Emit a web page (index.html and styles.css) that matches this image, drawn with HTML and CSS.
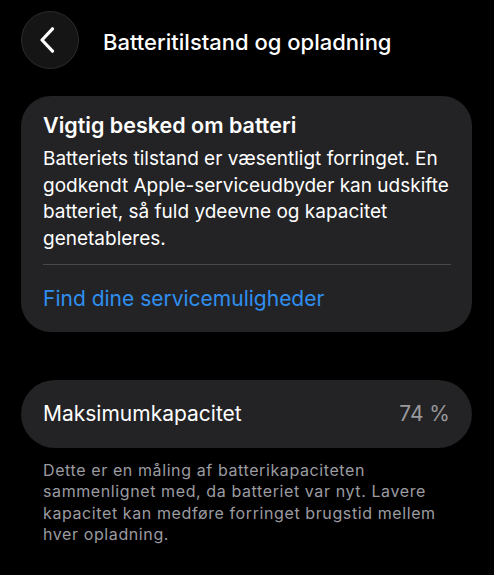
FILE: index.html
```html
<!DOCTYPE html>
<html lang="da">

<head>
    <meta charset="UTF-8">
    <meta name="viewport" content="width=device-width, initial-scale=1.0">
    <title>Batteritilstand og opladning</title>
    <link rel="stylesheet" href="styles.css">
</head>

<body>
    <div class="header">
        <div class="back">
            <svg width="18" height="26" viewBox="0 0 18 26">
                <path d="M13.5 1.8 L3 13 L13.5 24.2" fill="none" stroke="#fff" stroke-width="3.2" stroke-linecap="round" stroke-linejoin="round" />
            </svg>
        </div>
        <h1>Batteritilstand og opladning</h1>
    </div>

    <div class="card notice">
        <h2>Vigtig besked om batteri</h2>
        <p>Batteriets tilstand er væsentligt forringet. En godkendt Apple-serviceudbyder kan udskifte batteriet, så fuld ydeevne og kapacitet genetableres.</p>
        <div class="divider"></div>
        <a class="link" href="#">Find dine servicemuligheder</a>
    </div>

    <div class="card row">
        <span>Maksimumkapacitet</span>
        <span class="value">74 %</span>
    </div>
    <p class="footnote">Dette er en måling af batterikapaciteten sammenlignet med, da batteriet var nyt. Lavere kapacitet kan medføre forringet brugstid mellem hver opladning.</p>
</body>

</html>
```

FILE: styles.css
```css
body {
    margin: 0;
    background: #000;
    color: #fff;
    font-family: Inter, "Noto Sans", sans-serif;
}

.header {
    display: flex;
    align-items: center;
    gap: 24px;
    padding: 11px 21px 0;
}

.back {
    width: 56px;
    height: 56px;
    border-radius: 50%;
    background: #151516;
    border: 1px solid #2c2c2e;
    display: flex;
    align-items: center;
    justify-content: center;
}

.back svg {
    margin-left: -4px;
}

h1 {
    margin: 3px 0 0;
    font-size: 22px;
    font-weight: 500;
}

.card {
    background: #232325;
    margin: 0 22px 0 21px;
}

.notice {
    margin-top: 27px;
    border-radius: 30px;
    padding: 16px 21px 20px 22px;
}

h2 {
    margin: 0 0 8px;
    font-size: 21.5px;
    line-height: 26px;
    font-weight: 600;
}

.notice p {
    margin: 0 -16px 0 0;
    font-size: 19px;
    line-height: 26.7px;
}

.divider {
    height: 1px;
    background: #48484a;
    margin: 11px 0 21px;
}

.link {
    display: block;
    color: #2f8ff0;
    text-decoration: none;
    font-size: 21px;
    line-height: 26px;
}

.row {
    margin-top: 48px;
    height: 68px;
    border-radius: 34px;
    padding: 0 22px;
    display: flex;
    align-items: center;
    justify-content: space-between;
    font-size: 21px;
}

.value {
    color: #98989d;
}

.footnote {
    margin: 12px 43px 0 43px;
    font-size: 16px;
    line-height: 21.5px;
    color: #9b9ba0;
    letter-spacing: 0.6px;
}
```
